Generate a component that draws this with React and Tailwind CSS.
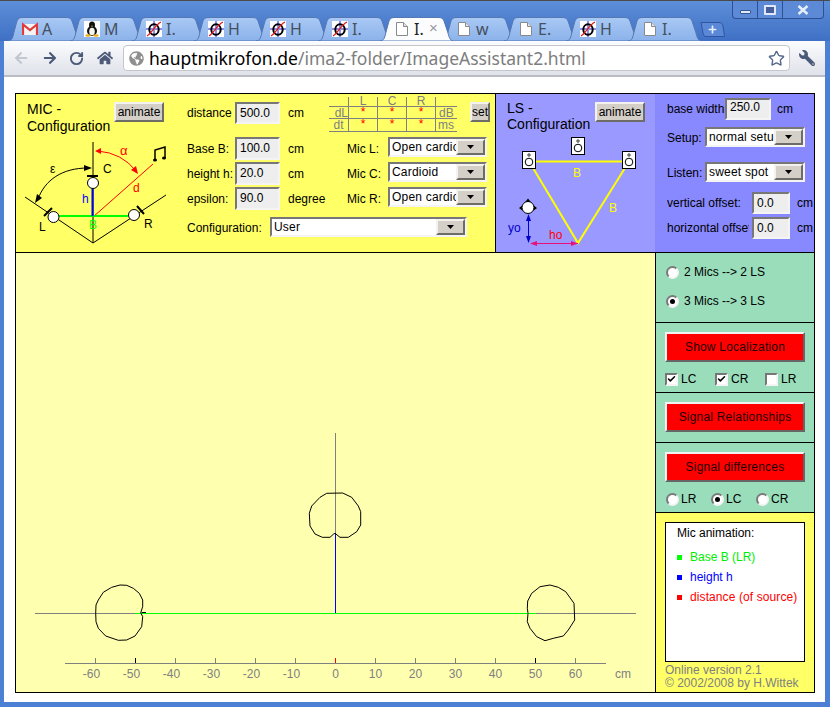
import React from 'react';
import { RotateCw, Star, Check } from 'lucide-react';
import { FaArrowLeft, FaArrowRight, FaHome, FaWrench, FaGlobeAmericas, FaPlus } from 'react-icons/fa';

const sunken = 'border-2 border-t-[#777] border-l-[#777] border-b-[#f4f4f4] border-r-[#f4f4f4]';
const raised = 'border-2 border-t-[#f4f2ee] border-l-[#f4f2ee] border-b-[#6e6c66] border-r-[#6e6c66]';

const tabs = [
  { icon: 'gmail', text: 'A' },
  { icon: 'tux', text: 'M' },
  { icon: 'phi', text: 'I.' },
  { icon: 'phi', text: 'H' },
  { icon: 'phi', text: 'H' },
  { icon: 'phi', text: 'I.' },
  { icon: 'doc', text: 'I.', active: true },
  { icon: 'doc', text: 'w' },
  { icon: 'doc', text: 'E.' },
  { icon: 'phi', text: 'H' },
  { icon: 'doc', text: 'I.' },
];

const Favicon = ({ type }) => {
  if (type === 'gmail') {
    return (
      <svg width="16" height="16" viewBox="0 0 16 16" className="shrink-0">
        <rect x="0" y="3" width="16" height="11" fill="#f4f4f4" />
        <path d="M1 14V3.500L8 9l7-5.500V14" fill="none" stroke="#e03a3a" strokeWidth="2.200" />
      </svg>
    );
  }
  if (type === 'tux') {
    return (
      <svg width="16" height="16" viewBox="0 0 16 16" className="shrink-0">
        <rect width="16" height="16" fill="#fff" />
        <ellipse cx="8" cy="4" rx="3" ry="3.500" fill="#111" />
        <ellipse cx="8" cy="10" rx="5" ry="5" fill="#111" />
        <ellipse cx="8" cy="10.500" rx="2.800" ry="3.800" fill="#f5f5f0" />
        <ellipse cx="4" cy="14.500" rx="2.800" ry="1.300" fill="#e8b020" />
        <ellipse cx="12" cy="14.500" rx="2.800" ry="1.300" fill="#e8b020" />
        <path d="M6.800 4.800h2.400L8 6z" fill="#e8b020" />
      </svg>
    );
  }
  if (type === 'phi') {
    return (
      <svg width="16" height="16" viewBox="0 0 16 16" className="shrink-0">
        <rect width="16" height="16" fill="#fff" />
        <path d="M0 8h16M8 0v16" stroke="#8f8fe8" strokeWidth="2" />
        <ellipse cx="8" cy="8.500" rx="4.700" ry="5.200" fill="none" stroke="#000" strokeWidth="2" />
        <path d="M1 15C6 12 9 4 15 1" fill="none" stroke="#e01818" strokeWidth="1.200" />
      </svg>
    );
  }
  return (
    <svg width="16" height="16" viewBox="0 0 16 16" className="shrink-0">
      <path d="M2.500 1.500h7l4 4v9h-11z" fill="#fff" stroke="#8a8a8a" />
      <path d="M9.500 1.500v4h4" fill="#e4e4e4" stroke="#8a8a8a" />
    </svg>
  );
};

const Tab = ({ icon, text, active }) => (
  <div className={`relative w-[62px] h-[24px] flex items-center pl-[8px] ${active ? 'z-10' : ''}`}>
    <svg width="73" height="24" viewBox="0 0 73 24" className="absolute left-[-6px] top-0">
      <defs>
        <linearGradient id="tabIdle" x1="0" y1="0" x2="0" y2="1">
          <stop offset="0" stopColor="#a9c9f5" />
          <stop offset="1" stopColor="#8bb2ea" />
        </linearGradient>
      </defs>
      <path
        d="M0 24C4 24 5 20 6 15L9 4C10 1 12 .5 15 .5H58C61 .5 63 1 64 4L68 16C69 21 71 24 73 24Z"
        fill={active ? '#fbfcfe' : 'url(#tabIdle)'}
        stroke="#5578b4"
      />
    </svg>
    <div className="relative flex items-center gap-[4px]">
      <Favicon type={icon} />
      <span className={`text-[16px] font-['Noto_Sans',sans-serif] ${active ? 'text-[#222]' : 'text-[#46505f]'}`}>{text}</span>
      {active && <span className="absolute left-[35px] top-[0px] text-[15px] text-[#999]">×</span>}
    </div>
  </div>
);

const WindowControls = () => (
  <div className="absolute right-[6px] top-0 flex h-[18px] w-[92px] rounded-b-[4px] border border-t-0 border-[#2d4f94] bg-[#5c8ad6] text-[#e6eefb]">
    <div className="w-[25px] flex items-center justify-center border-r border-[#2d4f94]">
      <div className="w-[11px] h-[4px] mt-[5px] rounded-[1px] bg-[#dfe9f9] border border-[#35568f]" />
    </div>
    <div className="w-[25px] flex items-center justify-center border-r border-[#2d4f94]">
      <div className="w-[12px] h-[10px] rounded-[1px] border-2 border-[#dfe9f9] bg-[#45609c]" />
    </div>
    <div className="flex-1 flex items-center justify-center">
      <svg width="12" height="10" viewBox="0 0 12 10">
        <path d="M1.500 1l9 8M10.500 1l-9 8" stroke="#e6eefb" strokeWidth="2.500" />
      </svg>
    </div>
  </div>
);

const Chrome = () => (
  <>
    <div className="relative h-[41px] bg-gradient-to-b from-[#5d8ed8] to-[#3f70c5] border-t border-[#4a4a4a] pt-[16px] pl-[14px]">
      <div className="flex">
        {tabs.map((tab, i) => (
          <Tab key={i} {...tab} />
        ))}
        <div className="relative ml-[4px] mt-[5px] w-[25px] h-[15px] flex items-center justify-center">
          <svg width="25" height="15" viewBox="0 0 25 15" className="absolute inset-0">
            <path d="M1 .5H19C21 .5 22 1 23 4L24.500 14.500H6C4 14.500 3.500 13 3 11Z" fill="#5a88d6" stroke="#2f55a0" />
          </svg>
          <FaPlus size={9} className="relative text-[#e6eefb]" />
        </div>
      </div>
      <WindowControls />
    </div>
    <div className="h-[36px] mx-[4px] mr-[5px] bg-gradient-to-b from-[#fbfcfe] to-[#dfe2e9] border-b-2 border-[#b9bcc4] flex items-center">
      <FaArrowLeft size={14} className="ml-[10px] text-[#c3c7d0]" />
      <FaArrowRight size={14} className="ml-[15px] text-[#4b5a78]" />
      <RotateCw size={15} strokeWidth={3} className="ml-[12px] text-[#4b5a78]" />
      <FaHome size={16} className="ml-[13px] text-[#4b5a78]" />
      <div className="ml-[10px] w-[667px] h-[26px] rounded-[4px] border border-[#c4c6cc] bg-white flex items-center pl-[5px]">
        <FaGlobeAmericas size={15} className="text-[#8f8f8f]" />
        <div className="ml-[5px] flex-1 text-[17.5px] font-['Noto_Sans',sans-serif] whitespace-nowrap text-[#7d7d7d]">
          <span className="text-black">hauptmikrofon.de</span>/ima2-folder/ImageAssistant2.html
        </div>
        <Star size={17} strokeWidth={2} className="mr-[4px] text-[#566a8c]" />
      </div>
      <FaWrench size={16} className="ml-[9px] text-[#4b5a78] -scale-x-100" />
    </div>
  </>
);

const ClassicButton = ({ children, className = '' }) => (
  <div className={`h-[20px] bg-[#d4d0c8] ${raised} flex items-center justify-center overflow-hidden text-[12px] text-black ${className}`}>
    {children}
  </div>
);

const Field = ({ value, className = '', leading = 'leading-[18px]' }) => (
  <div className={`bg-[#eeeeee] ${sunken} pl-[3px] text-[12px] ${leading} text-black overflow-hidden ${className}`}>{value}</div>
);

const Select = ({ value, className = '' }) => (
  <div className={`h-[20px] flex bg-white ${sunken} ${className}`}>
    <div className="flex-1 overflow-hidden whitespace-nowrap pl-[2px] text-[12px] tracking-[0.2px] leading-[16px] text-black">{value}</div>
    <div className={`w-[29px] shrink-0 bg-[#d4d0c8] ${raised} flex items-center justify-center`}>
      <svg width="7" height="4" viewBox="0 0 7 4">
        <path d="M0 0h7L3.500 4z" fill="#000" />
      </svg>
    </div>
  </div>
);

const LevelTable = () => {
  const head = 'border-r border-b border-[#808080] h-full text-center text-[#808080] leading-[8px]';
  const star = 'border-r border-b border-[#808080] text-center text-[#ff0000] leading-[10px]';
  const side = 'border-b border-[#808080] text-[#808080] leading-[12px] overflow-hidden';
  return (
    <div className="w-[128px] h-[36px] grid grid-cols-[20px_29px_29px_29px_21px] grid-rows-[10px_12px_13px] text-[12px]">
      <div className={head} />
      <div className={head}>L</div>
      <div className={head}>C</div>
      <div className={head}>R</div>
      <div className="border-b border-[#808080]" />
      <div className={`${side} border-r text-right`}>dL</div>
      <div className={star}>*</div>
      <div className={star}>*</div>
      <div className={star}>*</div>
      <div className={`${side} pl-[3px]`}>dB</div>
      <div className={`${side} border-r text-center`}>dt</div>
      <div className={star}>*</div>
      <div className={star}>*</div>
      <div className={star}>*</div>
      <div className={`${side} pl-[2px]`}>ms</div>
    </div>
  );
};

const MicDiagram = () => (
  <svg width="159" height="112" viewBox="16 140 159 112" className="block font-['Liberation_Sans',sans-serif]">
    <path d="M93 142V243M25 197L93 243L166 195" fill="none" stroke="#000" />
    <path d="M93 217L153 164" stroke="#ff0000" />
    <path d="M58 216H128" stroke="#00ff00" strokeWidth="2" />
    <path d="M92.500 188V216" stroke="#0000ff" strokeWidth="2" />
    <circle cx="93" cy="183" r="5.500" fill="#fff" stroke="#000" />
    <circle cx="53.500" cy="217" r="5.500" fill="#fff" stroke="#000" />
    <circle cx="134" cy="215" r="5.500" fill="#fff" stroke="#000" />
    <path d="M87 176H98M44 216L52 208M137 206L144 214" stroke="#000" strokeWidth="2" />
    <path d="M98 151Q122 153 136 171" fill="none" stroke="#ff0000" />
    <path d="M95 151L101 148V154ZM138 174L131 170L136 166Z" fill="#ff0000" />
    <path d="M88 168C62 168 45 180 38 199" fill="none" stroke="#000" />
    <path d="M92 168L84 165V171ZM35 203L37 194L42 198Z" fill="#000" />
    <path d="M155 160V150L165 147V158" fill="none" stroke="#000" strokeWidth="1.500" />
    <ellipse cx="155" cy="160" rx="2" ry="1.500" fill="#000" />
    <ellipse cx="164" cy="158" rx="2" ry="1.500" fill="#000" />
    <text x="120" y="155" fontSize="13" fill="#ff0000">α</text>
    <text x="133" y="192" fontSize="12" fill="#ff0000">d</text>
    <text x="82" y="203" fontSize="12" fill="#0000ff">h</text>
    <text x="89" y="229" fontSize="12" fill="#00ff00">B</text>
    <text x="39" y="231" fontSize="12" fill="#000">L</text>
    <text x="144" y="228" fontSize="12" fill="#000">R</text>
    <text x="103" y="173" fontSize="12" fill="#000">C</text>
    <text x="50" y="173" fontSize="12" fill="#000">ε</text>
  </svg>
);

const Speaker = ({ x, y, w = 13, h = 17 }) => (
  <g>
    <rect x={x + 0.5} y={y + 0.5} width={w} height={h} fill="#fff" stroke="#000" />
    <circle cx={x + w / 2 + 0.5} cy={y + h - 6} r="3.800" fill="#fff" stroke="#000" />
    <circle cx={x + w / 2 + 0.5} cy={y + 4} r="1.200" fill="#fff" stroke="#000" strokeWidth=".800" />
  </g>
);

const LsDiagram = () => (
  <svg width="159" height="122" viewBox="496 130 159 122" className="block font-['Liberation_Sans',sans-serif]">
    <path d="M535 161.500H622M533 168L578 243L625 168" fill="none" stroke="#ffff00" strokeWidth="2" />
    <Speaker x={571} y={137} />
    <Speaker x={522} y={151} />
    <Speaker x={622} y={151} />
    <text x="573" y="177" fontSize="12" fill="#ffff00">B</text>
    <text x="609" y="212" fontSize="12" fill="#ffff00">B</text>
    <path d="M528 198.500L524.500 203H531.500ZM519 208L523 205V211ZM537 208L533 205V211Z" fill="#000" />
    <circle cx="528" cy="207.500" r="6" fill="#fff" stroke="#000" />
    <path d="M528.500 216V242" stroke="#0000cc" />
    <path d="M528.500 214L526 221H531ZM528.500 243L526 236H531Z" fill="#0000cc" />
    <path d="M532 243.500H578" stroke="#e8107a" />
    <path d="M530 243.500L537 241V246ZM578 243.500L571 241V246Z" fill="#e8107a" />
    <text x="508" y="232" fontSize="12" fill="#0000cc">yo</text>
    <text x="549" y="239" fontSize="12" fill="#ff0000">ho</text>
  </svg>
);

const Label = ({ children, className = '' }) => (
  <div className={`text-[12px] text-black whitespace-nowrap overflow-hidden ${className}`}>{children}</div>
);

const MicRow = ({ label, value, unit, mic, micValue }) => (
  <div className="flex h-[25px]">
    <Label className="w-[48px] leading-[24px]">{label}</Label>
    <Field value={value} className="w-[45px] h-[23px]" />
    <Label className="w-[67px] pl-[8px] leading-[24px]">{unit}</Label>
    <Label className="w-[41px] leading-[25px]">{mic}</Label>
    <Select value={micValue} className="w-[99px]" />
  </div>
);

const MicPanel = () => (
  <div className="flex w-[480px] bg-[#ffff66] border-r border-black">
    <div className="w-[159px] shrink-0">
      <div className="flex h-[46px] pl-[11px] pt-[7px]">
        <div className="w-[87px] text-[14px] leading-[17px] text-black">
          MIC -<br />Configuration
        </div>
        <ClassicButton className="w-[50px] mt-[1px]">animate</ClassicButton>
      </div>
      <MicDiagram />
    </div>
    <div className="flex-1 pl-[12px] pt-[3px]">
      <div className="flex h-[40px]">
        <Label className="w-[48px] mt-[5px] leading-[23px]">distance</Label>
        <Field value="500.0" className="w-[45px] h-[22px] mt-[5px]" />
        <Label className="w-[49px] pl-[8px] mt-[5px] leading-[23px]">cm</Label>
        <LevelTable />
        <ClassicButton className="w-[20px] mt-[5px] ml-[13px]">set</ClassicButton>
      </div>
      <MicRow label="Base B:" value="100.0" unit="cm" mic="Mic L:" micValue="Open cardioid" />
      <MicRow label="height h:" value="20.0" unit="cm" mic="Mic C:" micValue="Cardioid" />
      <MicRow label="epsilon:" value="90.0" unit="degree" mic="Mic R:" micValue="Open cardioid" />
      <div className="flex mt-[5px]">
        <Label className="w-[83px] leading-[23px]">Configuration:</Label>
        <Select value="User" className="w-[197px]" />
      </div>
    </div>
  </div>
);

const LsPanel = () => (
  <div className="flex flex-1">
    <div className="w-[159px] bg-[#9999ff]">
      <div className="flex h-[36px] pl-[11px] pt-[6px]">
        <div className="w-[88px] text-[14px] leading-[16px] text-black whitespace-nowrap">
          LS -<br />Configuration
        </div>
        <ClassicButton className="w-[50px] mt-[2px]">animate</ClassicButton>
      </div>
      <LsDiagram />
    </div>
    <div className="flex-1 bg-[#8888ff] pl-[12px] pt-[4px] overflow-hidden">
      <div className="flex h-[29px]">
        <Label className="w-[58px] leading-[22px]">base width</Label>
        <Field value="250.0" leading="leading-[15px]" className="w-[46px] h-[22px]" />
        <Label className="pl-[6px] leading-[22px]">cm</Label>
      </div>
      <div className="flex h-[35px]">
        <Label className="w-[38px] leading-[22px]">Setup:</Label>
        <Select value="normal setup" className="w-[100px]" />
      </div>
      <div className="flex h-[30px]">
        <Label className="w-[38px] leading-[22px]">Listen:</Label>
        <Select value="sweet spot" className="w-[100px]" />
      </div>
      <div className="flex h-[25px]">
        <Label className="w-[85px] leading-[22px]">vertical offset:</Label>
        <Field value="0.0" className="w-[38px] h-[22px]" />
        <Label className="pl-[7px] leading-[22px] overflow-visible">cm</Label>
      </div>
      <div className="flex">
        <Label className="w-[82px] mr-[3px] leading-[22px]">horizontal offset</Label>
        <Field value="0.0" className="w-[38px] h-[22px]" />
        <Label className="pl-[7px] leading-[22px] overflow-visible">cm</Label>
      </div>
    </div>
  </div>
);

const ticks = [-60, -50, -40, -30, -20, -10, 0, 10, 20, 30, 40, 50, 60];
const cardioidL = '140.7,612.7 142.7,606.7 142.7,600 139.3,593.3 133.3,588.3 126.7,585.3 120,585 111.7,587.3 103.3,592.3 98.3,600 96,605 95.7,613.3 96,621.7 98.3,628.3 105.7,636 118.3,640.3 126.7,640 135,636 141.7,626.7 142.7,616.7';
const cardioidR = '527.3,608.3 527.7,601 531.7,593.3 540,586.7 550,585 558.3,587.3 565.7,591.7 574,603.3 574.7,620 568.3,630 563.3,636 553.3,638.3 545,640.7 536.7,636.7 530,628.3 527.3,621.7 528,613.3';
const cardioidC = '335,533.3 333.3,534.3 330,537.3 322.3,537.3 315,534 310,526 309.3,513.3 311.7,506 320,497.3 326.7,493.3 342.7,493 351.7,497.3 358.3,506 360.7,511.7 360.7,525 356.7,531.7 348.3,537.3 340,537.3';

const Plot = () => (
  <svg width="639" height="439" viewBox="16 253 639 439" className="block bg-[#ffffb0] font-['Liberation_Sans',sans-serif]">
    <path d="M35 613.500H636M335.500 433V533" stroke="#808080" fill="none" />
    <path d="M135 613.500H536" stroke="#00ff00" />
    <path d="M335.500 533V613" stroke="#0000ff" />
    <polygon points={cardioidL} fill="none" stroke="#000" />
    <polygon points={cardioidR} fill="none" stroke="#000" />
    <polygon points={cardioidC} fill="none" stroke="#000" />
    <path d="M141.500 612.500H146" stroke="#000" />
    <path d="M65 663.500H606" stroke="#808080" />
    {ticks.map((t) => {
      const x = 335.5 + t * 4;
      const stroke = t === 0 ? '#ff0000' : Math.abs(t) === 50 ? '#000' : '#808080';
      return (
        <g key={t}>
          <path d={`M${x} 658V663`} stroke={stroke} />
          <text x={t < 0 ? x - 4 : x} y="677.500" fontSize="12" fill="#808080" textAnchor="middle">{t}</text>
        </g>
      );
    })}
    <text x="615" y="678" fontSize="12" fill="#808080">cm</text>
  </svg>
);

const Radio = ({ checked }) => (
  <div className="w-[13px] h-[13px] shrink-0 rounded-full border-2 border-t-[#7a7a7a] border-l-[#7a7a7a] border-b-[#f4f4f4] border-r-[#f4f4f4] bg-white flex items-center justify-center">
    {checked && <div className="w-[5px] h-[5px] rounded-full bg-black" />}
  </div>
);

const Box = ({ checked }) => (
  <div className={`w-[13px] h-[13px] shrink-0 ${sunken} bg-white flex items-center justify-center`}>
    {checked && <Check size={10} strokeWidth={4} className="text-black" />}
  </div>
);

const RedButton = ({ children }) => (
  <div className="h-[30px] bg-[#ff0000] border-2 border-t-[#f2f2f2] border-l-[#f2f2f2] border-b-[#666] border-r-[#666] flex items-center justify-center text-[12px] tracking-[0.2px] text-[#200]">
    {children}
  </div>
);

const Section = ({ className = '', children }) => (
  <div className={`bg-[#99ddbb] border-b border-black pl-[9px] pr-[9px] ${className}`}>{children}</div>
);

const SidePanel = () => (
  <div className="w-[159px] border-l border-black flex flex-col text-[12px] text-black">
    <Section className="h-[70px] pt-[12px]">
      <div className="flex items-center gap-[5px] ml-[1px] h-[14px]">
        <Radio />2 Mics --&gt; 2 LS
      </div>
      <div className="flex items-center gap-[5px] ml-[1px] mt-[15px] h-[14px]">
        <Radio checked />3 Mics --&gt; 3 LS
      </div>
    </Section>
    <Section className="h-[70px] pt-[9px]">
      <RedButton>Show Localization</RedButton>
      <div className="flex mt-[8px]">
        <div className="w-[50px] flex items-center gap-[3px]"><Box checked />LC</div>
        <div className="w-[50px] flex items-center gap-[3px]"><Box checked />CR</div>
        <div className="flex items-center gap-[3px]"><Box />LR</div>
      </div>
    </Section>
    <Section className="h-[50px] pt-[9px]">
      <RedButton>Signal Relationships</RedButton>
    </Section>
    <Section className="h-[70px] pt-[9px]">
      <RedButton>Signal differences</RedButton>
      <div className="flex mt-[8px] ml-[1px]">
        <div className="w-[45px] flex items-center gap-[2px]"><Radio />LR</div>
        <div className="w-[45px] flex items-center gap-[2px]"><Radio checked />LC</div>
        <div className="flex items-center gap-[2px]"><Radio />CR</div>
      </div>
    </Section>
    <div className="flex-1 bg-[#ffff66] pl-[9px] pt-[9px]">
      <div className="w-[140px] h-[140px] bg-white border border-black pl-[11px] pt-[2px]">
        <div className="leading-[16px]">Mic animation:</div>
        <div className="mt-[6px] flex items-center gap-[8px] h-[20px] text-[#00ee00]">
          <div className="w-[5px] h-[5px] bg-[#00ff00]" />Base B (LR)
        </div>
        <div className="flex items-center gap-[8px] h-[20px] text-[#0000ff]">
          <div className="w-[5px] h-[5px] bg-[#0000ff]" />height h
        </div>
        <div className="flex items-center gap-[8px] h-[20px] text-[#ff0000] whitespace-nowrap tracking-[0.1px]">
          <div className="w-[5px] h-[5px] bg-[#ff0000]" />distance (of source)
        </div>
      </div>
      <div className="mt-[2px] leading-[13px] text-[#808080] whitespace-nowrap">
        Online version 2.1<br />© 2002/2008 by H.Wittek
      </div>
    </div>
  </div>
);

export default function App() {
  return (
    <div className="w-[830px] h-[707px] overflow-hidden bg-[#4c80d4] font-['Liberation_Sans',sans-serif] flex flex-col">
      <Chrome />
      <div className="h-[625px] mx-[4px] mr-[5px] bg-white pt-[16px] pl-[11px]">
        <div className="w-[800px] h-[600px] border border-black flex flex-col">
          <div className="flex h-[159px] border-b border-black">
            <MicPanel />
            <LsPanel />
          </div>
          <div className="flex flex-1">
            <Plot />
            <SidePanel />
          </div>
        </div>
      </div>
    </div>
  );
}
